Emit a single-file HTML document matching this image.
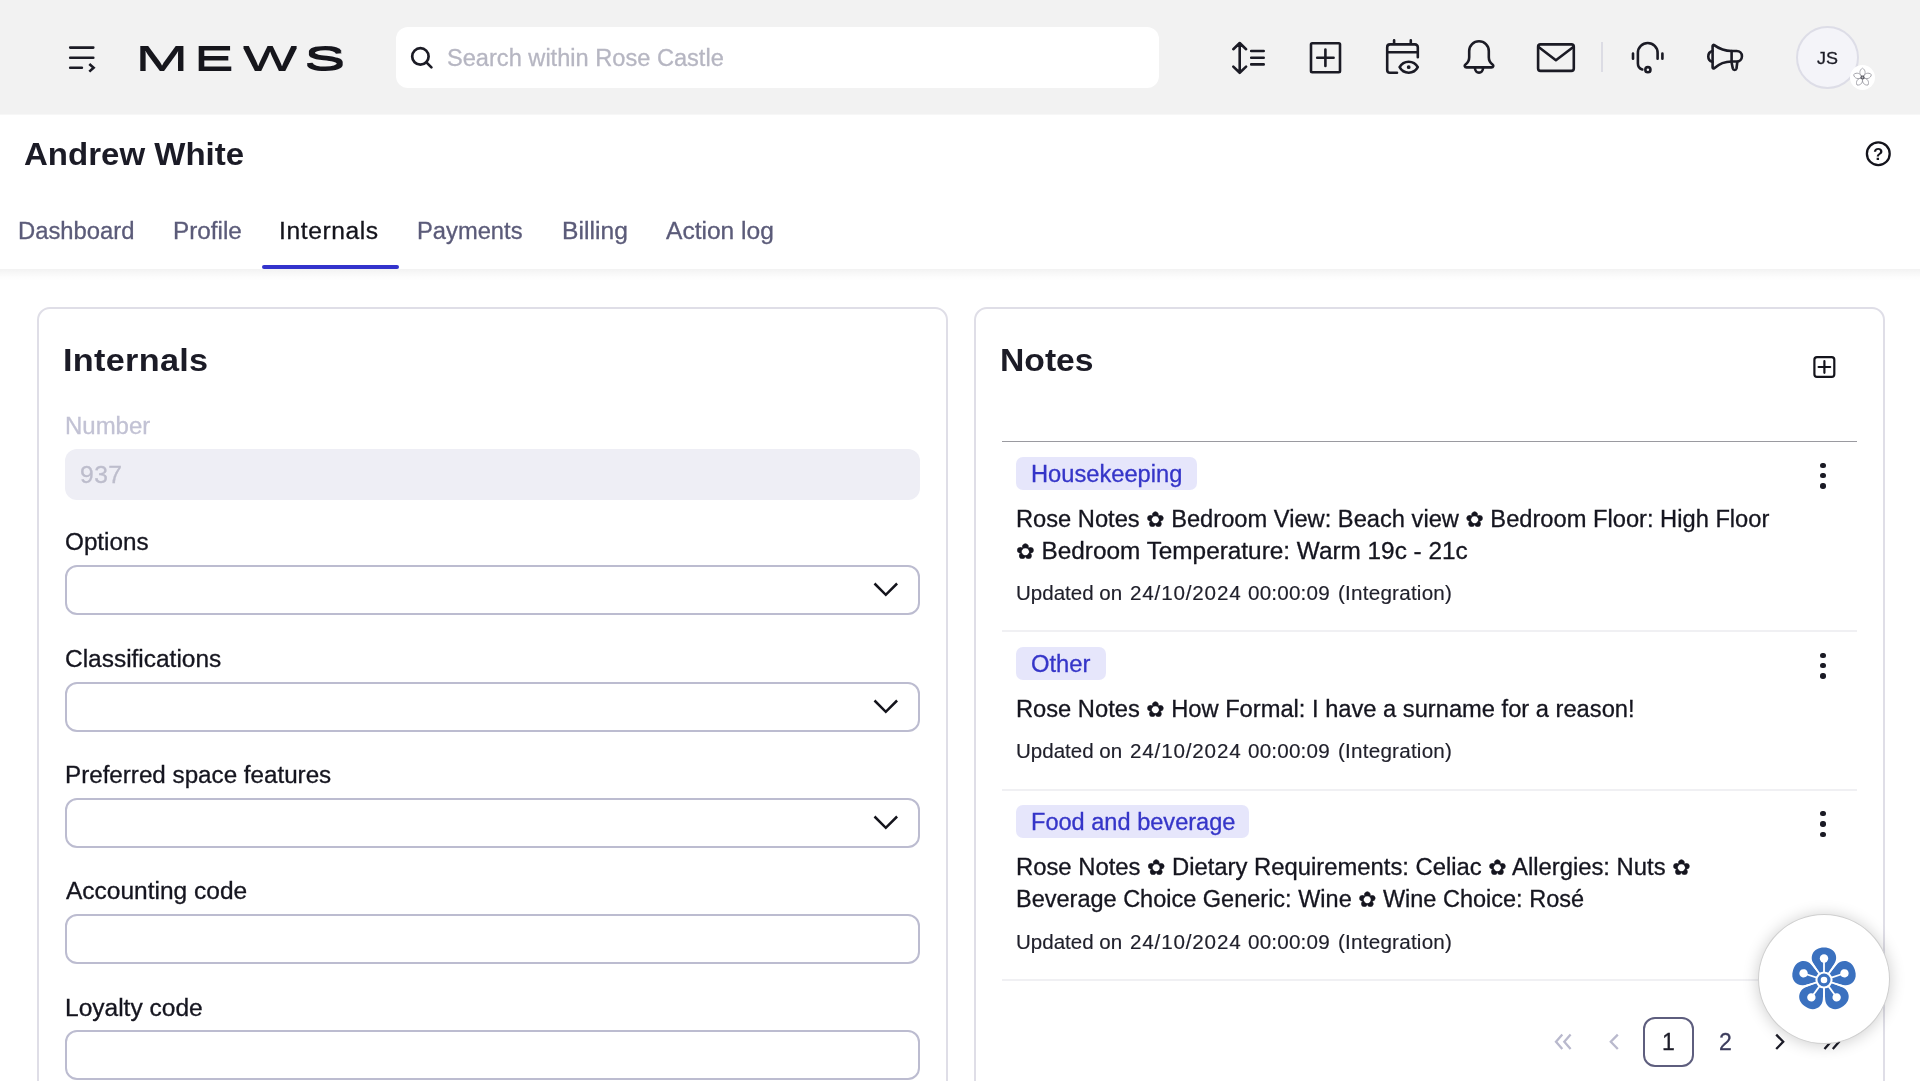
<!DOCTYPE html>
<html lang="en">
<head>
<meta charset="utf-8">
<title>Andrew White - Internals</title>
<style>
*{box-sizing:border-box;margin:0;padding:0}
html,body{width:1920px;height:1081px;overflow:hidden;background:#fff}
body{font-family:"Liberation Sans","DejaVu Sans",sans-serif;color:#1c1c28;position:relative;-webkit-text-stroke:.3px;will-change:transform}
body span,body h1,body h2,body a,body label,body p,body time{position:absolute;transform-origin:0 0;white-space:nowrap;font-weight:normal;text-decoration:none;display:block}
h1,h2{-webkit-text-stroke:0}
.upd{-webkit-text-stroke:.15px}
p b{font-weight:normal;font-size:.92em}
.topbar{position:absolute;left:0;top:0;width:1920px;height:115px;background:#f2f2f2;border-bottom:1px solid #f7f7f7}
.search{position:absolute;left:396px;top:27px;width:763px;height:61px;border-radius:12px;background:#fff}
svg{position:absolute;overflow:visible}
.ico *{fill:none;stroke:#1b1b25;stroke-width:2.6;stroke-linecap:round;stroke-linejoin:round}
.vdiv{position:absolute;left:1601px;top:42px;width:2px;height:30px;background:#dcdce4}
.avatar{position:absolute;left:1795.500px;top:25.500px;width:63px;height:63px;border-radius:50%;background:#f4f4f9;border:2px solid #dddde7}
.badge{position:absolute;left:1849.500px;top:64.500px;width:25px;height:25px;border-radius:50%;background:#fff}
.pagehead{position:absolute;left:0;top:115px;width:1920px;height:154px;background:#fff}
.pageshadow{position:absolute;left:0;top:269px;width:1920px;height:12px;background:linear-gradient(rgba(0,0,0,.052),rgba(0,0,0,.03) 30%,rgba(0,0,0,.012) 65%,rgba(0,0,0,0))}
.tabline{position:absolute;left:262px;top:265px;width:137px;height:4px;border-radius:2px;background:#3333cc}
.card{position:absolute;top:307px;height:800px;border:2px solid #dfdee7;border-radius:13px;background:#fff}
.inp{position:absolute;left:65px;width:855px;height:50px;border:2px solid #bcbcd0;border-radius:12px;background:#fff}
.inp.dis{border:0;background:#eeeef5}
.tag{position:absolute;left:1016px;height:33px;border-radius:7px;background:#e6e6fb}
.sep{position:absolute;left:1002px;width:855px;height:2px;background:#f0f0f3}
.dots{position:absolute;left:1820.300px;width:6px}
.dots i{display:block;width:5.400px;height:5.400px;border-radius:50%;background:#1b1b25;margin:0 0 5px 0}
.pgbox{position:absolute;left:1643px;top:1017px;width:51px;height:50px;border:2px solid #5e5e7e;border-radius:12px}
.fab{position:absolute;left:1758px;top:914px;width:132px;height:130px;border-radius:50%;background:#fff;border:1px solid #cfcfcf;box-shadow:0 1px 16px rgba(0,0,0,.2)}
</style>
</head>
<body>
<header class="topbar">
<svg class="ico" width="1920" height="114" viewBox="0 0 1920 114" style="left:0;top:0">
<!-- menu -->
<g style="stroke-width:2.400"><path d="M70.2 47.6H93.3M70.2 57.7H93.3M70.2 67.8H81.9"/><path d="M89.3 64L93.6 67.8L89.3 71.6" style="stroke-linecap:butt;stroke-linejoin:miter"/></g>
<!-- line height -->
<g style="stroke-width:2.400"><path d="M1239.7 43.4V72.4M1233.3 49.2L1239.7 43L1246.1 49.2M1233.3 66.6L1239.7 72.8L1246.1 66.6M1251.2 51H1263.7M1251.2 57.7H1263.7M1251.2 64.4H1263.7"/></g>
<!-- add -->
<g style="stroke-width:2.400"><rect x="1311" y="43.2" width="29" height="29.1" rx="1.2"/><path d="M1317.2 57.7H1333.6M1325.4 49.5V65.9"/></g>
<!-- calendar eye -->
<g style="stroke-width:2.400"><path d="M1397 72.8H1390A2.8 2.8 0 0 1 1387.2 70V47.2A2.8 2.8 0 0 1 1390 44.4H1415A2.8 2.8 0 0 1 1417.8 47.2V57.2M1387.2 52.2H1417.8M1394.1 40.2V44.4M1410.8 40.2V44.4"/><path d="M1399.600 67.200C1401.500 63.700 1404.700 61.700 1408.700 61.700C1412.700 61.700 1415.900 63.700 1417.800 67.200C1415.900 70.700 1412.700 72.700 1408.700 72.700C1404.700 72.700 1401.500 70.700 1399.600 67.200Z"/><circle cx="1408.7" cy="67.2" r="1" style="fill:#1b1b25;stroke-width:1.8"/></g>
<!-- bell -->
<g style="stroke-width:2.400"><path d="M1469.200 51.100A9.800 9.800 0 0 1 1488.800 51.100V57.300C1488.800 60.700 1490.100 62.700 1492.500 64.500C1494 65.700 1493.300 67.400 1491.500 67.400H1466.500C1464.700 67.400 1464 65.700 1465.500 64.500C1467.900 62.700 1469.200 60.700 1469.200 57.300Z"/><path d="M1475 68.2A4 4.4 0 0 0 1483 68.200"/></g>
<!-- mail -->
<g style="stroke-width:2.400"><rect x="1538.100" y="44.400" width="35.700" height="26.500" rx="2.4"/><path d="M1538.6 47L1555.9 60.200L1573.3 47"/></g>
<!-- headset -->
<g style="stroke-width:2.400"><path d="M1633 53.500V58.700M1662.400 53.500V58.700"/><path d="M1657.600 58.700V52.850A9.850 9.850 0 0 0 1637.900 52.850V63.500A6.300 6.300 0 0 0 1642.300 69.500"/><circle cx="1647.900" cy="69.700" r="2.550"/></g>
<!-- megaphone -->
<g style="stroke-width:2.400"><path d="M1712.400 51A5.600 5.600 0 0 0 1712.400 61.800"/><path d="M1712.600 46A1 1 0 0 1 1714.200 45.100C1719 48.600 1724.500 51 1731.600 51H1736.700A5.250 5.250 0 0 1 1736.700 61.500H1731.600C1724.500 61.500 1719 64 1714.200 68.300A1 1 0 0 1 1712.600 67.400Z"/><path d="M1731.600 51V62.500L1732.800 68.500A1.900 1.900 0 0 0 1736.500 68.500L1737.300 62"/></g>
</svg>
<svg width="210" height="34" viewBox="0 0 210 34" style="left:138px;top:41px" aria-label="Mews">
<defs><filter id="fat" x="-5%" y="-20%" width="110%" height="140%"><feMorphology operator="dilate" radius="0.01 0.8"/></filter></defs>
<g filter="url(#fat)" style="font-family:'Liberation Sans',sans-serif;font-size:32.800px;fill:#14141c">
<text y="28.600"><tspan x="-2.96" textLength="53.76" lengthAdjust="spacingAndGlyphs">M</tspan><tspan x="55.88" textLength="40.13" lengthAdjust="spacingAndGlyphs">E</tspan><tspan x="105.00" textLength="54.11" lengthAdjust="spacingAndGlyphs">W</tspan><tspan x="165.98" textLength="41.62" lengthAdjust="spacingAndGlyphs">S</tspan></text>
</g>
</svg>
<div class="search">
<svg class="ico" width="30" height="30" viewBox="0 0 30 30" style="left:8px;top:14px"><circle cx="16.400" cy="15.400" r="8.200" style="stroke-width:2.700"/><path d="M22.400 21.400L27.400 26.400" style="stroke-width:2.700"/></svg>
<span style="left:51px;top:15px;font-size:23px;line-height:32px;letter-spacing:0.00px;color:#b6b6c2;transform:scaleX(1.0261)">Search within Rose Castle</span>
</div>
<div class="vdiv"></div>
<div class="avatar"></div>
<span style="left:1817px;top:46px;font-size:17px;line-height:25px;letter-spacing:0.00px;color:#1b1b25;transform:scaleX(1.055)">JS</span>
<div class="badge"><svg width="25" height="25" viewBox="-12.500 -12.500 25 25" style="left:0;top:0"><g fill="none" stroke="#9a9aa2" stroke-width=".8">
<path d="M0 -0.500C-3.500 -3 -3.500 -7.500 0 -9.300C3.500 -7.500 3.500 -3 0 -0.500Z"/>
<path d="M0 -0.500C-3.500 -3 -3.500 -7.500 0 -9.300C3.500 -7.500 3.500 -3 0 -0.500Z" transform="rotate(72)"/>
<path d="M0 -0.500C-3.500 -3 -3.500 -7.500 0 -9.300C3.500 -7.500 3.500 -3 0 -0.500Z" transform="rotate(144)"/>
<path d="M0 -0.500C-3.500 -3 -3.500 -7.500 0 -9.300C3.500 -7.500 3.500 -3 0 -0.500Z" transform="rotate(216)"/>
<path d="M0 -0.500C-3.500 -3 -3.500 -7.500 0 -9.300C3.500 -7.500 3.500 -3 0 -0.500Z" transform="rotate(288)"/>
<circle r="1.500" stroke="#55555c" stroke-width="1.200"/></g></svg></div>
</header>
<div class="pagehead"></div>
<div class="pageshadow"></div>
<h1 style="left:24px;top:133px;font-size:32px;line-height:42px;letter-spacing:-0.00px;color:#1b1b26;font-weight:bold;transform:scaleX(1.0318)">Andrew White</h1>
<svg width="28" height="28" viewBox="0 0 28 28" style="left:1864px;top:140px"><circle cx="14.300" cy="13.700" r="11.400" fill="none" stroke="#14141c" stroke-width="2.300"/><text x="14.300" y="19.800" text-anchor="middle" style="font-family:'Liberation Sans',sans-serif;font-weight:bold;font-size:17px;fill:#14141c">?</text></svg>
<nav>
<a style="left:18px;top:215px;font-size:23px;line-height:32px;letter-spacing:0.00px;color:#5b5b79;transform:scaleX(1.0351)">Dashboard</a><a style="left:173px;top:215px;font-size:23px;line-height:32px;letter-spacing:0.00px;color:#5b5b79;transform:scaleX(1.0547)">Profile</a><a style="left:279px;top:215px;font-size:23px;line-height:32px;letter-spacing:0.55px;color:#14141c;transform:scaleX(1.07)">Internals</a><a style="left:417px;top:215px;font-size:23px;line-height:32px;letter-spacing:0.00px;color:#5b5b79;transform:scaleX(1.0317)">Payments</a><a style="left:562px;top:215px;font-size:23px;line-height:32px;letter-spacing:0.06px;color:#5b5b79;transform:scaleX(1.07)">Billing</a><a style="left:666px;top:215px;font-size:23px;line-height:32px;letter-spacing:0.00px;color:#5b5b79;transform:scaleX(1.0675)">Action log</a>
<div class="tabline"></div>
</nav>
<main>
<section>
<div class="card" style="left:37px;width:911px"></div>
<h2 style="left:63px;top:339px;font-size:32px;line-height:42px;letter-spacing:0.28px;color:#1b1b26;font-weight:bold;transform:scaleX(1.07)">Internals</h2><label style="left:65px;top:410px;font-size:23px;line-height:32px;letter-spacing:0.00px;color:#c2c2d4;transform:scaleX(1.042)">Number</label><div class="inp dis" style="top:449px;height:50.500px"></div>
<span style="left:80px;top:459px;font-size:23px;line-height:32px;letter-spacing:0.42px;color:#bdbdcc;transform:scaleX(1.07)">937</span><label style="left:65px;top:526px;font-size:23px;line-height:32px;letter-spacing:-0.00px;color:#15151f;transform:scaleX(1.0551)">Options</label><div class="inp" style="top:565px"></div>
<svg width="26" height="16" viewBox="0 0 26 16" style="left:873.4px;top:582.2px"><path d="M1.500 1.500L12.800 12.800L24.100 1.500" fill="none" stroke="#14141c" stroke-width="2.500"/></svg>
<label style="left:65px;top:643px;font-size:23px;line-height:32px;letter-spacing:0.00px;color:#15151f;transform:scaleX(1.063)">Classifications</label><div class="inp" style="top:682px"></div>
<svg width="26" height="16" viewBox="0 0 26 16" style="left:873.4px;top:699.2px"><path d="M1.500 1.500L12.800 12.800L24.100 1.500" fill="none" stroke="#14141c" stroke-width="2.500"/></svg>
<label style="left:65px;top:759px;font-size:23px;line-height:32px;letter-spacing:0.00px;color:#15151f;transform:scaleX(1.0516)">Preferred space features</label><div class="inp" style="top:798px"></div>
<svg width="26" height="16" viewBox="0 0 26 16" style="left:873.4px;top:815.2px"><path d="M1.500 1.500L12.800 12.800L24.100 1.500" fill="none" stroke="#14141c" stroke-width="2.500"/></svg>
<label style="left:66px;top:875px;font-size:23px;line-height:32px;letter-spacing:-0.00px;color:#15151f;transform:scaleX(1.0651)">Accounting code</label><div class="inp" style="top:914px"></div>
<label style="left:65px;top:992px;font-size:23px;line-height:32px;letter-spacing:0.00px;color:#15151f;transform:scaleX(1.0661)">Loyalty code</label><div class="inp" style="top:1030px"></div>
</section>
<section>
<div class="card" style="left:974px;width:911px"></div>
<h2 style="left:1000px;top:339px;font-size:32px;line-height:42px;letter-spacing:-0.00px;color:#1b1b26;font-weight:bold;transform:scaleX(1.0523)">Notes</h2><svg width="26" height="26" viewBox="0 0 26 26" style="left:1811px;top:354px"><rect x="3.400" y="3.100" width="19.900" height="19.800" rx="2.600" fill="none" stroke="#14141c" stroke-width="2.200"/><path d="M7.600 13H19.200M13.400 7.200V18.800" fill="none" stroke="#14141c" stroke-width="2.200" stroke-linecap="round"/></svg>
<div class="sep" style="top:441px;height:1px;background:#9a9aa0"></div>
<div class="tag" style="top:457px;width:180.5px"><span style="left:15px;top:1px;font-size:23px;line-height:32px;letter-spacing:0.00px;color:#3535c8;transform:scaleX(1.029)">Housekeeping</span></div>
<div class="dots" style="top:462.6px"><i></i><i></i><i></i></div>
<p style="left:1016px;top:503px;font-size:23px;line-height:32px;letter-spacing:0.00px;color:#15151f;transform:scaleX(1.0295)">Rose Notes <b>✿</b> Bedroom View: Beach view <b>✿</b> Bedroom Floor: High Floor</p><p style="left:1016px;top:535px;font-size:23px;line-height:32px;letter-spacing:0.00px;color:#15151f;transform:scaleX(1.0584)"><b>✿</b> Bedroom Temperature: Warm 19c - 21c</p><div class="upd"><span style="left:1016px;top:580px;font-size:19.3px;line-height:27px;letter-spacing:0.00px;color:#20202b;transform:scaleX(1.0653)">Updated on</span> <span style="left:1130px;top:580px;font-size:19.3px;line-height:27px;letter-spacing:0.77px;color:#20202b;transform:scaleX(1.07)">24/10/2024</span> <span style="left:1248px;top:580px;font-size:19.3px;line-height:27px;letter-spacing:0.18px;color:#20202b;transform:scaleX(1.07)">00:00:09</span> <span style="left:1338px;top:580px;font-size:19.3px;line-height:27px;letter-spacing:0.21px;color:#20202b;transform:scaleX(1.07)">(Integration)</span></div>
<div class="sep" style="top:630px"></div>
<div class="tag" style="top:647px;width:89.6px"><span style="left:15px;top:1px;font-size:23px;line-height:32px;letter-spacing:0.00px;color:#3535c8;transform:scaleX(1.0333)">Other</span></div>
<div class="dots" style="top:652.6px"><i></i><i></i><i></i></div>
<p style="left:1016px;top:693px;font-size:23px;line-height:32px;letter-spacing:0.00px;color:#15151f;transform:scaleX(1.0298)">Rose Notes <b>✿</b> How Formal: I have a surname for a reason!</p><div class="upd"><span style="left:1016px;top:738px;font-size:19.3px;line-height:27px;letter-spacing:0.00px;color:#20202b;transform:scaleX(1.0653)">Updated on</span> <span style="left:1130px;top:738px;font-size:19.3px;line-height:27px;letter-spacing:0.77px;color:#20202b;transform:scaleX(1.07)">24/10/2024</span> <span style="left:1248px;top:738px;font-size:19.3px;line-height:27px;letter-spacing:0.18px;color:#20202b;transform:scaleX(1.07)">00:00:09</span> <span style="left:1338px;top:738px;font-size:19.3px;line-height:27px;letter-spacing:0.21px;color:#20202b;transform:scaleX(1.07)">(Integration)</span></div>
<div class="sep" style="top:789px"></div>
<div class="tag" style="top:805px;width:233.4px"><span style="left:15px;top:1px;font-size:23px;line-height:32px;letter-spacing:0.00px;color:#3535c8;transform:scaleX(1.0247)">Food and beverage</span></div>
<div class="dots" style="top:811.1px"><i></i><i></i><i></i></div>
<p style="left:1016px;top:851px;font-size:23px;line-height:32px;letter-spacing:0.00px;color:#15151f;transform:scaleX(1.0354)">Rose Notes <b>✿</b> Dietary Requirements: Celiac <b>✿</b> Allergies: Nuts <b>✿</b></p><p style="left:1016px;top:883px;font-size:23px;line-height:32px;letter-spacing:0.00px;color:#15151f;transform:scaleX(1.0218)">Beverage Choice Generic: Wine <b>✿</b> Wine Choice: Rosé</p><div class="upd"><span style="left:1016px;top:929px;font-size:19.3px;line-height:27px;letter-spacing:0.00px;color:#20202b;transform:scaleX(1.0653)">Updated on</span> <span style="left:1130px;top:929px;font-size:19.3px;line-height:27px;letter-spacing:0.77px;color:#20202b;transform:scaleX(1.07)">24/10/2024</span> <span style="left:1248px;top:929px;font-size:19.3px;line-height:27px;letter-spacing:0.18px;color:#20202b;transform:scaleX(1.07)">00:00:09</span> <span style="left:1338px;top:929px;font-size:19.3px;line-height:27px;letter-spacing:0.21px;color:#20202b;transform:scaleX(1.07)">(Integration)</span></div>
<div class="sep" style="top:979px"></div>
<svg width="300" height="40" viewBox="1550 1022 300 40" style="left:1550px;top:1022px" fill="none" stroke-width="2.300">
<path d="M1562.300 1034.600L1556 1041.800L1562.300 1049M1570.600 1034.600L1564.300 1041.800L1570.600 1049" stroke="#b9b9cd"/>
<path d="M1617.800 1034.600L1610.800 1041.800L1617.800 1049" stroke="#b9b9cd"/>
<path d="M1776.200 1034.600L1783.200 1041.800L1776.200 1049" stroke="#1c1c28"/>
<path d="M1824.500 1034.600L1830.800 1041.800L1824.500 1049M1832.800 1034.600L1839.100 1041.800L1832.800 1049" stroke="#1c1c28"/>
</svg>
<div class="pgbox"></div>
<span style="left:1662px;top:1026px;font-size:23px;line-height:32px;letter-spacing:0.00px;color:#1c1c28">1</span><span style="left:1719px;top:1026px;font-size:23px;line-height:32px;letter-spacing:0.00px;color:#3c3c5c">2</span></section>
</main>
<div class="fab"><svg width="70" height="70" viewBox="-35 -35 70 70" style="left:30px;top:29.500px">
<g transform="rotate(0)"><path d="M0 0L-10.500 -16.500C-14.500 -22.500 -11.500 -32.500 0 -32.500C11.500 -32.500 14.500 -22.500 10.500 -16.500Z" fill="#3b71bf"/><circle cx="0" cy="-21.500" r="4.200" fill="#fff"/><path d="M0 -21V-6" stroke="#fff" stroke-width="1.800"/></g><g transform="rotate(72)"><path d="M0 0L-10.500 -16.500C-14.500 -22.500 -11.500 -32.500 0 -32.500C11.500 -32.500 14.500 -22.500 10.500 -16.500Z" fill="#3b71bf"/><circle cx="0" cy="-21.500" r="4.200" fill="#fff"/><path d="M0 -21V-6" stroke="#fff" stroke-width="1.800"/></g><g transform="rotate(144)"><path d="M0 0L-10.500 -16.500C-14.500 -22.500 -11.500 -32.500 0 -32.500C11.500 -32.500 14.500 -22.500 10.500 -16.500Z" fill="#3b71bf"/><circle cx="0" cy="-21.500" r="4.200" fill="#fff"/><path d="M0 -21V-6" stroke="#fff" stroke-width="1.800"/></g><g transform="rotate(216)"><path d="M0 0L-10.500 -16.500C-14.500 -22.500 -11.500 -32.500 0 -32.500C11.500 -32.500 14.500 -22.500 10.500 -16.500Z" fill="#3b71bf"/><circle cx="0" cy="-21.500" r="4.200" fill="#fff"/><path d="M0 -21V-6" stroke="#fff" stroke-width="1.800"/></g><g transform="rotate(288)"><path d="M0 0L-10.500 -16.500C-14.500 -22.500 -11.500 -32.500 0 -32.500C11.500 -32.500 14.500 -22.500 10.500 -16.500Z" fill="#3b71bf"/><circle cx="0" cy="-21.500" r="4.200" fill="#fff"/><path d="M0 -21V-6" stroke="#fff" stroke-width="1.800"/></g><path d="M0 0V-23" stroke="#fff" stroke-width="1.800" transform="rotate(36)"/><path d="M0 0V-23" stroke="#fff" stroke-width="1.800" transform="rotate(108)"/><path d="M0 0V-23" stroke="#fff" stroke-width="1.800" transform="rotate(180)"/><path d="M0 0V-23" stroke="#fff" stroke-width="1.800" transform="rotate(252)"/><path d="M0 0V-23" stroke="#fff" stroke-width="1.800" transform="rotate(324)"/><circle r="8.600" fill="#fff"/><circle r="4.900" fill="#fff" stroke="#3b71bf" stroke-width="3.200"/>
</svg></div>
</body>
</html>
